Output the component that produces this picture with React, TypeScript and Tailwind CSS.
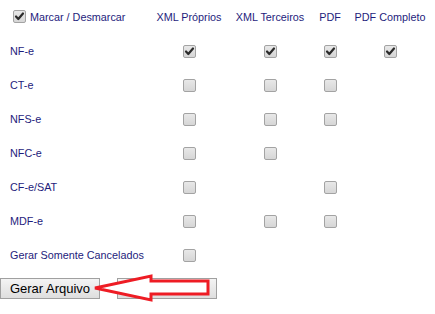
import React from "react";

type Row = { label: string; cols: (boolean | null)[] };

const rows: Row[] = [
  { label: "NF-e", cols: [true, true, true, true] },
  { label: "CT-e", cols: [false, false, false, null] },
  { label: "NFS-e", cols: [false, false, false, null] },
  { label: "NFC-e", cols: [false, false, null, null] },
  { label: "CF-e/SAT", cols: [false, null, false, null] },
  { label: "MDF-e", cols: [false, false, false, null] },
  { label: "Gerar Somente Cancelados", cols: [false, null, null, null] },
];

const headers = ["XML Próprios", "XML Terceiros", "PDF", "PDF Completo"];

const Box = ({ checked }: { checked: boolean }) => (
  <span className="inline-flex h-[13px] w-[13px] items-center justify-center rounded-[2px] border border-[#a3a3a3] bg-gradient-to-b from-[#e8e8e8] to-[#d6d6d6]">
    {checked && (
      <svg width="11" height="11" viewBox="0 0 11 11">
        <path d="M2 5.5 L4.3 8 L9 2.5" fill="none" stroke="#2b2b2b" strokeWidth="2.2" strokeLinecap="round" strokeLinejoin="round" />
      </svg>
    )}
  </span>
);

export default function App() {
  return (
    <div className="relative h-[314px] w-[435px] bg-white font-['Liberation_Sans',Arial,sans-serif] text-[10.8px] text-[#1e1c7c]">
      <div className="grid grid-cols-[150px_78px_84px_36px_84px]">
        <div className="flex h-[34px] items-center gap-[4px] pl-[13px]">
          <span className="-mt-[2px] flex">
            <Box checked />
          </span>
          <span>Marcar / Desmarcar</span>
        </div>
        {headers.map((h) => (
          <div key={h} className="flex h-[34px] items-center justify-center whitespace-nowrap">
            {h}
          </div>
        ))}
        {rows.map((r) => (
          <React.Fragment key={r.label}>
            <div className="flex h-[34px] items-center whitespace-nowrap pl-[10px]">{r.label}</div>
            {r.cols.map((c, i) => (
              <div key={i} className="flex h-[34px] items-center justify-center">
                {c !== null && <Box checked={c} />}
              </div>
            ))}
          </React.Fragment>
        ))}
      </div>
      <div className="mt-[6px] flex gap-[17px]">
        <button className="h-[21px] w-[100px] border border-[#a0a0a0] bg-gradient-to-b from-[#f4f4f4] to-[#dedede] text-[13px] text-black">
          Gerar Arquivo
        </button>
        <button className="h-[21px] w-[100px] border border-[#a0a0a0] bg-gradient-to-b from-[#f4f4f4] to-[#dedede]" />
      </div>
      <svg className="absolute left-0 top-0" width="435" height="314" viewBox="0 0 435 314">
        <path
          d="M95 288 L151 276 L151 281 L208 281 L208 294 L151 294 L151 300 Z"
          fill="white"
          stroke="#ee1c24"
          strokeWidth="3"
          strokeLinejoin="miter"
        />
      </svg>
    </div>
  );
}
